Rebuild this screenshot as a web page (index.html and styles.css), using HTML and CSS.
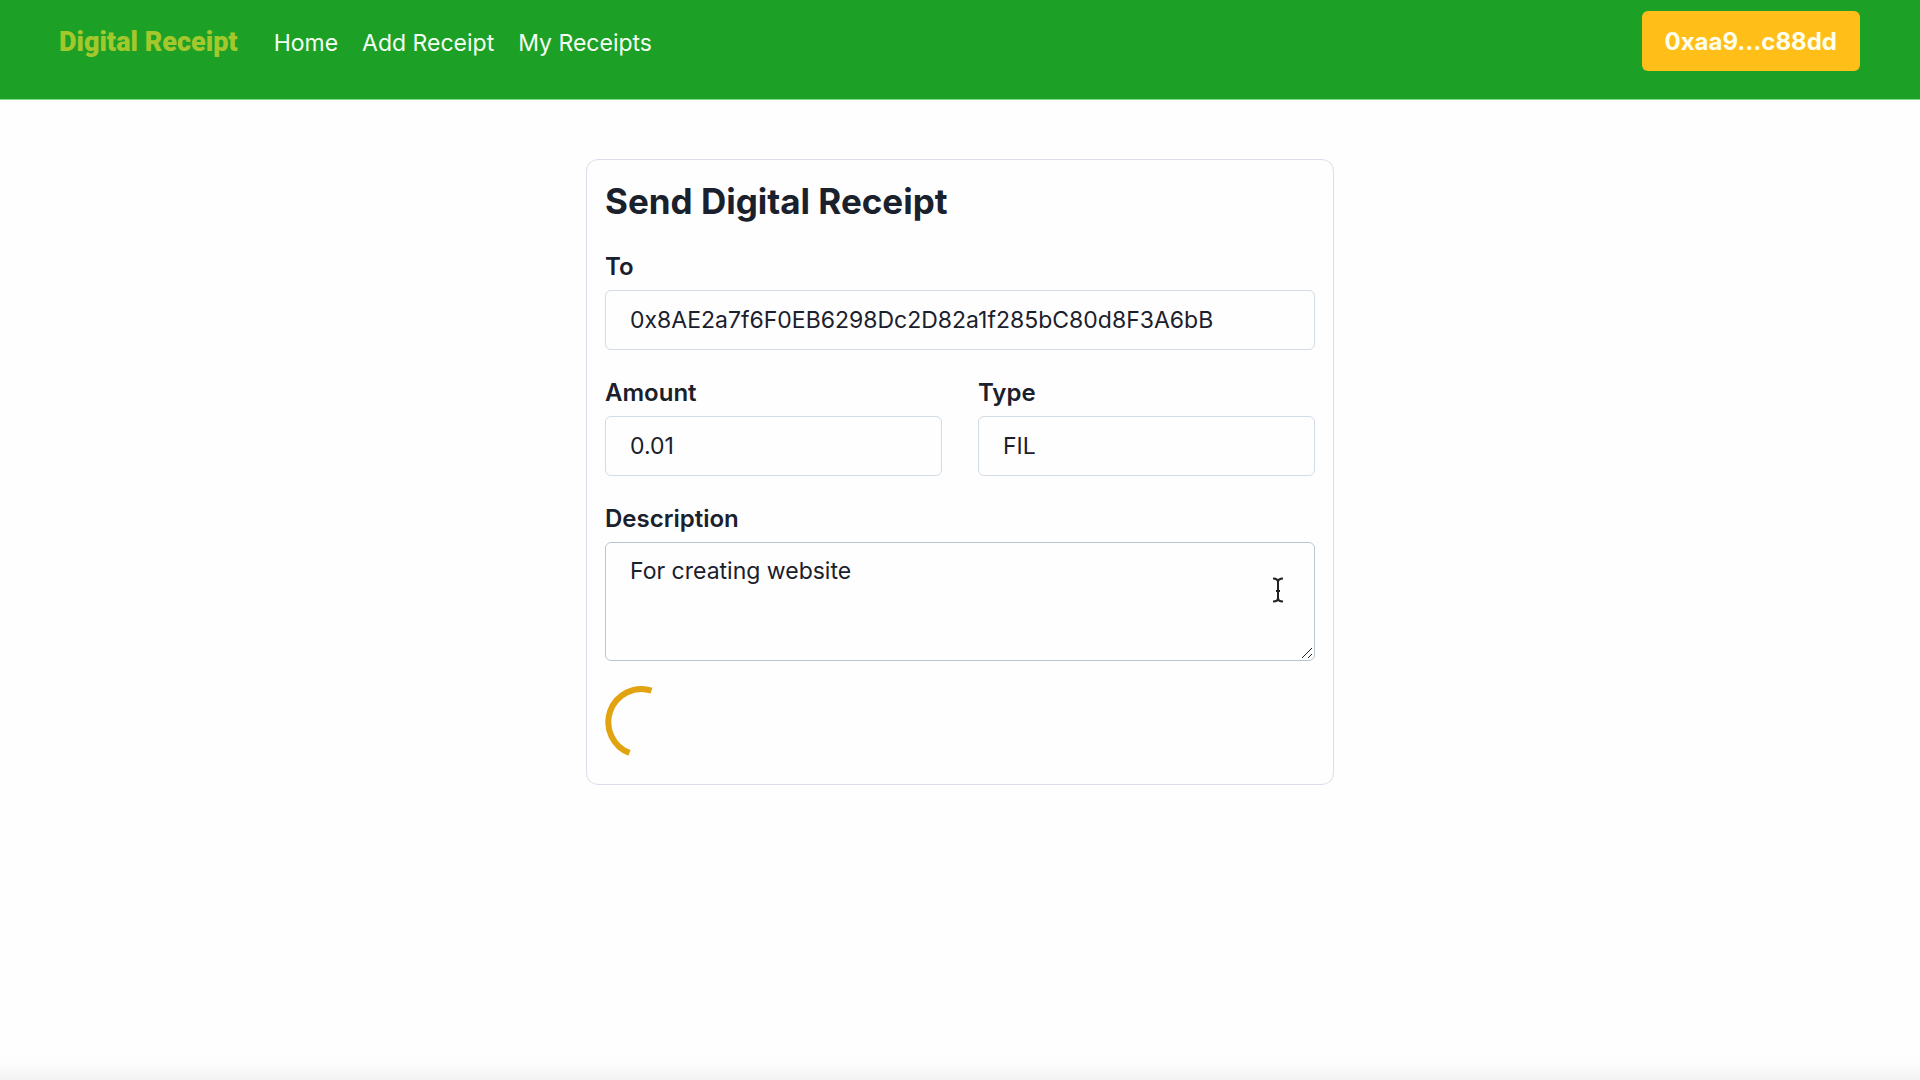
FILE: index.html
```html
<!DOCTYPE html>
<html lang="en">
<head>
  <meta charset="utf-8">
  <meta name="viewport" content="width=device-width, initial-scale=1">
  <title>Digital Receipt</title>
  <link rel="stylesheet" href="styles.css">
</head>
<body>
  <header class="site-header">
    <a class="brand" href="#">Digital Receipt</a>
    <nav class="nav">
      <a href="#">Home</a>
      <a href="#">Add Receipt</a>
      <a href="#">My Receipts</a>
    </nav>
    <button class="wallet" type="button">0xaa9...c88dd</button>
  </header>

  <main class="page">
    <form class="card">
      <h1 class="title">Send Digital Receipt</h1>
      <div class="field">
        <label for="to">To</label>
        <input id="to" type="text" spellcheck="false" value="0x8AE2a7f6F0EB6298Dc2D82a1f285bC80d8F3A6bB">
      </div>
      <div class="row">
        <div class="field">
          <label for="amount">Amount</label>
          <input id="amount" type="text" value="0.01">
        </div>
        <div class="field">
          <label for="type">Type</label>
          <input id="type" type="text" value="FIL">
        </div>
      </div>
      <div class="field">
        <label for="description">Description</label>
        <div class="area">
          <textarea id="description" spellcheck="false">For creating website</textarea>
          <svg class="grip" viewBox="0 0 12 12" aria-hidden="true"><path d="M1 11 11 1M7 11l4-4"/></svg>
          <svg class="caret" viewBox="0 0 12 26" aria-hidden="true"><path d="M1 1.5c3 0 5 1 5 3.500v16c0 2.500-2 3.500-5 3.500M11 1.500c-3 0-5 1-5 3.500M6 21c0 2.500 2 3.500 5 3.500M4 14h4"/></svg>
        </div>
      </div>
      <svg class="spinner" viewBox="0 0 72 72" role="img" aria-label="Loading"><path d="M46.500 4.700A33 33 0 0 0 24.500 66.900"/></svg>
    </form>
  </main>
</body>
</html>
```

FILE: styles.css
```css
* {
  box-sizing: border-box;
}

body {
  margin: 0;
  min-height: 100vh;
  font-family: Inter, "Liberation Sans", sans-serif;
  font-size: 24px;
  line-height: 36px;
  color: #1a202c;
  background: linear-gradient(to top, #f3f3f3, #fcfcfc 16px, #fefefe 32px);
}

.site-header {
  display: flex;
  align-items: center;
  padding: 11px 60px 28px 59px;
  border-bottom: 1px solid #7cdc80;
  background: #1da026;
}

.brand {
  padding-top: 1px;
  color: #a4c82c;
  font-family: Roboto, sans-serif;
  font-size: 27px;
  font-weight: 900;
  text-decoration: none;
}

.nav {
  display: flex;
  gap: 24px;
  margin-left: 36px;
  padding-top: 4px;
  font-size: 23px;
}

.nav a {
  color: #f4fff4;
  text-decoration: none;
}

.wallet {
  height: 60px;
  margin-left: auto;
  padding: 2px 23px 0;
  border: 0;
  border-radius: 6px;
  background: #ffbe18;
  color: #fffff0;
  font: inherit;
  font-weight: 700;
}

.page {
  padding: 59px 24px;
}

.card {
  display: flex;
  flex-direction: column;
  gap: 25px;
  max-width: 748px;
  margin: 0 auto;
  padding: 18px 18px 26px;
  border: 1px solid #d9deea;
  border-radius: 12px;
}

.title {
  margin: 0;
  font-size: 35px;
  line-height: 46px;
  font-weight: 650;
}

.row {
  display: grid;
  grid-template-columns: 1fr 1fr;
  gap: 36px;
}

.field {
  display: flex;
  flex-direction: column;
  gap: 5px;
}

label {
  font-weight: 600;
}

input,
textarea {
  display: block;
  width: 100%;
  border: 1px solid #d3dbe7;
  border-radius: 6px;
  outline: 0;
  background: transparent;
  color: inherit;
  font: inherit;
  font-size: 23px;
}

input {
  height: 60px;
  padding: 0 24px;
}

textarea {
  height: 119px;
  padding: 10px 24px;
  border-color: #b9c5d5;
  resize: vertical;
}

textarea::-webkit-resizer {
  background: transparent;
}

.area {
  position: relative;
}

.grip,
.caret {
  position: absolute;
  fill: none;
  stroke: #222;
  pointer-events: none;
}

.grip {
  right: 2px;
  bottom: 2px;
  width: 12px;
}

.caret {
  top: 35px;
  right: 31px;
  width: 12px;
  stroke-width: 2;
}

.spinner {
  width: 72px;
  fill: none;
  stroke: #e1a30f;
  stroke-width: 6;
}
```
